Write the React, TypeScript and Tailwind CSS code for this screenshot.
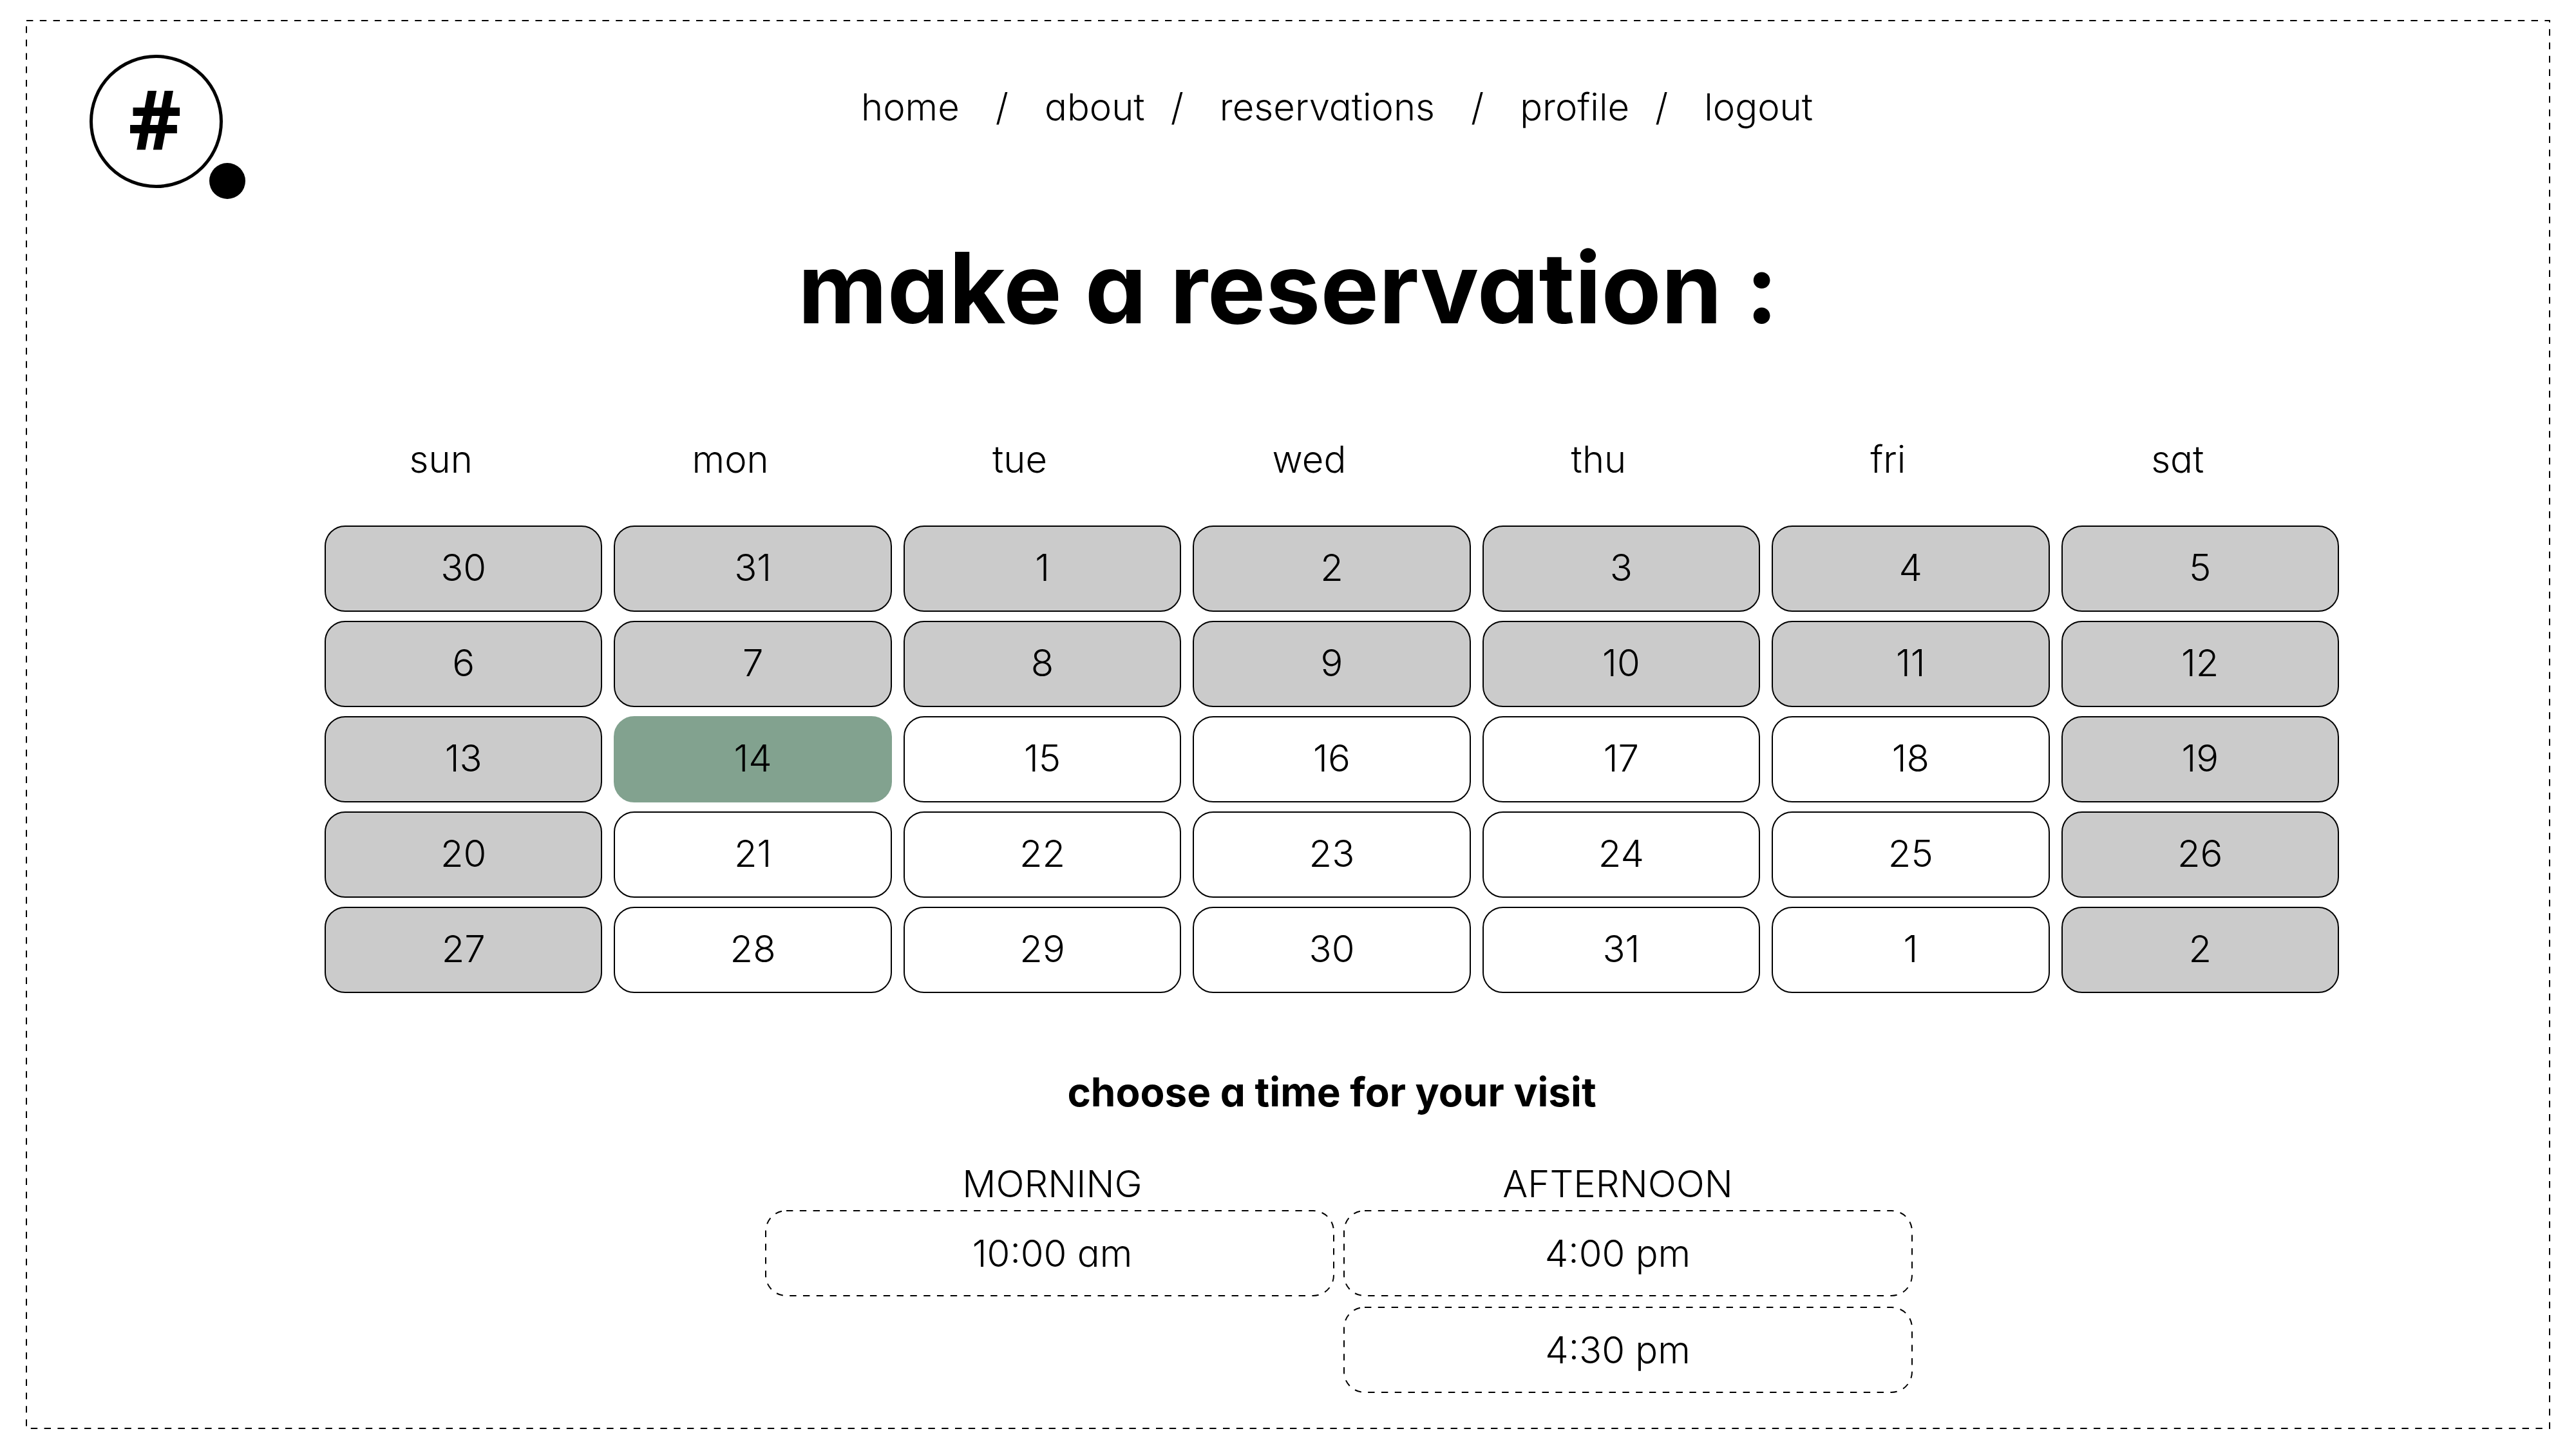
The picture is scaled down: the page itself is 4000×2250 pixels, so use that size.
import React, { Fragment, useState } from "react";

type NavItem = { label: string; gap: string };

const NAV: NavItem[] = [
  { label: "home", gap: "ml-14" },
  { label: "about", gap: "ml-10" },
  { label: "reservations", gap: "ml-14" },
  { label: "profile", gap: "ml-10" },
  { label: "logout", gap: "" },
];

const WEEKDAYS = ["sun", "mon", "tue", "wed", "thu", "fri", "sat"];

type Day = { label: string; closed: boolean };

const open = (label: string): Day => ({ label, closed: false });
const closed = (label: string): Day => ({ label, closed: true });

const WEEKS: Day[][] = [
  ["30", "31", "1", "2", "3", "4", "5"].map(closed),
  ["6", "7", "8", "9", "10", "11", "12"].map(closed),
  [closed("13"), ...["14", "15", "16", "17", "18"].map(open), closed("19")],
  [closed("20"), ...["21", "22", "23", "24", "25"].map(open), closed("26")],
  [closed("27"), ...["28", "29", "30", "31", "1"].map(open), closed("2")],
];

const PERIODS = [
  { name: "MORNING", inset: "pl-2", slots: ["10:00 am"] },
  { name: "AFTERNOON", inset: "pr-8", slots: ["4:00 pm", "4:30 pm"] },
];

/* Long-dash outline; CSS dashed borders cannot set the dash length. */
function DashedOutline({ radius }: { radius: number }) {
  return (
    <svg
      className="pointer-events-none absolute inset-0 h-full w-full overflow-visible"
      aria-hidden="true"
    >
      <rect
        width="100%"
        height="100%"
        rx={radius}
        fill="none"
        stroke="#000"
        strokeWidth="2"
        strokeDasharray="10.4 10.4"
      />
    </svg>
  );
}

function Logo() {
  return (
    <a
      href="#home"
      aria-label="Home"
      className="relative mt-[53px] ml-[98px] flex size-[207px] items-center justify-center rounded-full border-[5px] border-black"
    >
      <span className="pr-1 pb-3 font-['Noto_Sans'] text-[128px] leading-none font-bold">#</span>
      <span className="absolute -right-10 -bottom-[22px] size-14 rounded-full bg-black" />
    </a>
  );
}

function DayCell({
  day,
  selected,
  onSelect,
}: {
  day: Day;
  selected: boolean;
  onSelect: () => void;
}) {
  const look = selected
    ? "border-[#82a28f] bg-[#82a28f]"
    : day.closed
      ? "border-black bg-[#cbcbcb]"
      : "border-black bg-white";
  return (
    <button
      type="button"
      disabled={day.closed}
      aria-pressed={selected}
      onClick={onSelect}
      className={`block h-[134px] w-full rounded-[32px] border-2 pb-1 ${look}`}
    >
      {day.label}
    </button>
  );
}

export default function App() {
  const [selected, setSelected] = useState("2-1");
  const [slot, setSlot] = useState("");

  return (
    <div className="flex min-h-screen bg-white px-[41px] py-8 font-['Inter',sans-serif] text-[58px] leading-[72px] font-light text-black [font-feature-settings:'cv11']">
      <div className="relative flex-1 pb-14">
        <DashedOutline radius={0} />

        <header className="grid h-[276px] grid-cols-[1fr_auto_1fr] items-start">
          <Logo />
          <nav aria-label="Main" className="mt-[98px] flex pl-[152px]">
            {NAV.map((item, i) => (
              <Fragment key={item.label}>
                <a href={`#${item.label}`}>{item.label}</a>
                {i < NAV.length - 1 && (
                  <span aria-hidden="true" className={`mr-14 ${item.gap}`}>
                    /
                  </span>
                )}
              </Fragment>
            ))}
          </nav>
        </header>

        <main>
          <h1 className="mt-[59px] text-center text-[152px] leading-[160px] font-bold">
            make a reservation :
          </h1>

          <div className="mt-[136px] pr-[309px] pl-[445px]">
            <table className="w-full table-fixed border-separate border-spacing-x-[18px] border-spacing-y-[14px] text-center">
              <thead>
                <tr>
                  {WEEKDAYS.map((d) => (
                    <th key={d} scope="col" className="p-0 pr-[70px] pb-[53px] font-light">
                      {d}
                    </th>
                  ))}
                </tr>
              </thead>
              <tbody>
                {WEEKS.map((week, r) => (
                  <tr key={r}>
                    {week.map((day, c) => (
                      <td key={c} className="p-0">
                        <DayCell
                          day={day}
                          selected={selected === `${r}-${c}`}
                          onSelect={() => setSelected(`${r}-${c}`)}
                        />
                      </td>
                    ))}
                  </tr>
                ))}
              </tbody>
            </table>

            <h2 className="mt-[100px] text-center text-[62px] leading-[80px] font-bold">
              choose a time for your visit
            </h2>
          </div>

          <div className="mt-[66px] pl-[158px]">
            <div className="mx-auto grid max-w-[1780px] grid-cols-2 gap-x-4">
              {PERIODS.map((period) => (
                <section key={period.name} aria-label={period.name} className="text-center">
                  <h3 className={period.inset}>{period.name}</h3>
                  <div className="mt-1.5 flex flex-col gap-[18px]">
                    {period.slots.map((time) => (
                      <button
                        key={time}
                        type="button"
                        aria-pressed={slot === time}
                        onClick={() => setSlot(time)}
                        className={`relative h-[132px] w-full rounded-[32px] ${period.inset}`}
                      >
                        <DashedOutline radius={32} />
                        {time}
                      </button>
                    ))}
                  </div>
                </section>
              ))}
            </div>
          </div>
        </main>
      </div>
    </div>
  );
}
